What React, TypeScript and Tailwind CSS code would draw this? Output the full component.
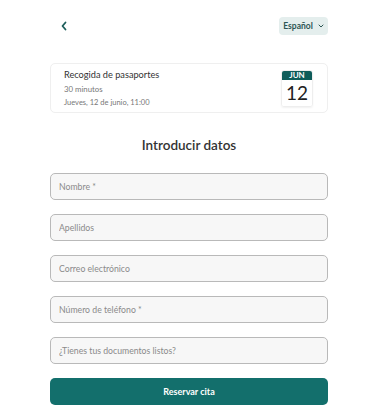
import React from 'react';

const fields = [
  "Nombre *",
  "Apellidos",
  "Correo electrónico",
  "Número de teléfono *",
  "¿Tienes tus documentos listos?",
];

const App = () => {
  return (
    <div className="w-[378px] h-[419px] bg-white font-['Lato',sans-serif] overflow-hidden">
      <div className="px-[50px] pt-[17px]">
        {/* top bar */}
        <div className="flex items-center justify-between h-[18px]">
          <button className="ml-[10px] text-[#1d5e5b]">
            <svg width="8" height="10" viewBox="0 0 8 10" fill="none">
              <path d="M5.5 1.5L2.5 5L5.5 8.5" stroke="currentColor" strokeWidth="1.8" strokeLinecap="round" strokeLinejoin="round" />
            </svg>
          </button>
          <button className="h-[18px] w-[49px] rounded-[4px] bg-[#e4eeed] text-[#2c5553] text-[8.5px] font-bold flex items-center justify-center gap-[5px]">
            Español
            <svg width="6" height="4" viewBox="0 0 6 4" fill="none">
              <path d="M1 1L3 3L5 1" stroke="currentColor" strokeWidth="1" strokeLinecap="round" strokeLinejoin="round" />
            </svg>
          </button>
        </div>

        {/* appointment card */}
        <div className="mt-[28px] h-[50px] rounded-[5px] border border-[#efefef] flex items-center justify-between pl-[13px] pr-[14px]">
          <div className="flex flex-col">
            <span className="text-[9.2px] leading-[13px] text-[#333]">Recogida de pasaportes</span>
            <span className="text-[7.8px] leading-[12px] mt-[2px] text-[#777]">30 minutos</span>
            <span className="text-[7.5px] leading-[12px] mt-[2px] text-[#777]">Jueves, 12 de junio, 11:00</span>
          </div>
          <div className="w-[32px] rounded-[3px] overflow-hidden border border-[#eeeeee] shadow-[0_1px_2px_rgba(0,0,0,0.06)]">
            <div className="h-[9px] bg-[#0e5c59] text-white text-[8px] font-bold leading-[9px] text-center">JUN</div>
            <div className="h-[26px] bg-white text-[#222] text-[19px] leading-[26px] text-center">12</div>
          </div>
        </div>

        <h1 className="mt-[22px] text-center text-[13.5px] leading-[20px] font-semibold text-[#333]">Introducir datos</h1>

        <div className="mt-[18px] flex flex-col gap-[14px]">
          {fields.map((f) => (
            <input
              key={f}
              placeholder={f}
              className="h-[27px] w-full rounded-[5px] border border-[#b9b9b9] bg-[#f7f7f7] px-[8px] text-[8.7px] placeholder:text-[#8a8a8a] outline-none"
            />
          ))}
        </div>

        <button className="mt-[14px] h-[27px] w-full rounded-[5px] bg-[#136f6c] text-white text-[9px] font-bold">
          Reservar cita
        </button>
      </div>
    </div>
  );
};

export default App;
